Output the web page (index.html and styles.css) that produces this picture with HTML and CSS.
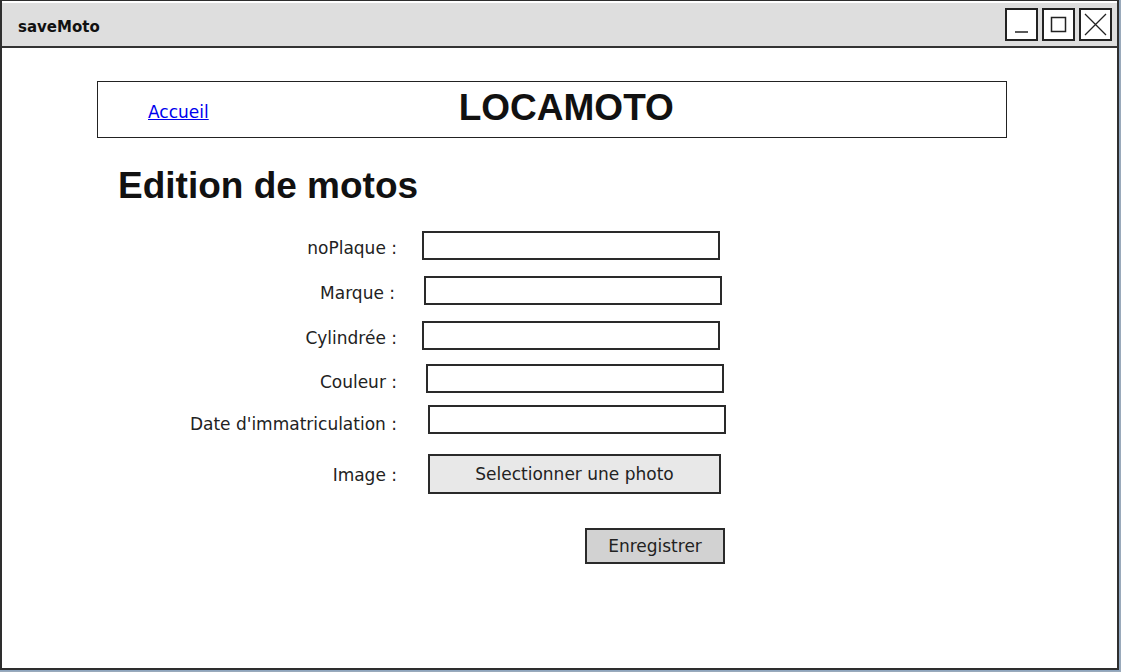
FILE: index.html
```html
<!DOCTYPE html>
<html lang="fr">
<head>
    <meta charset="UTF-8">
    <meta name="viewport" content="width=device-width, initial-scale=1.0">
    <title>saveMoto</title>
    <link rel="stylesheet" href="styles.css">
</head>
<body>
    <div class="window">
        <div class="title-bar">
            <span class="title">saveMoto</span>
            <div class="win-buttons">
                <span class="win-btn">
                    <svg width="29" height="29" viewBox="0 0 29 29"><line x1="8" y1="22" x2="21" y2="22" stroke="#222" stroke-width="1.5"/></svg>
                </span>
                <span class="win-btn">
                    <svg width="29" height="29" viewBox="0 0 29 29"><rect x="7.5" y="7.5" width="14" height="14" fill="none" stroke="#222" stroke-width="1.5"/></svg>
                </span>
                <span class="win-btn">
                    <svg width="29" height="29" viewBox="0 0 29 29"><path d="M4 4 L25 25 M25 4 L4 25" stroke="#222" stroke-width="1.3"/></svg>
                </span>
            </div>
        </div>

        <div class="content">
            <div class="header">
                <a href="#" class="home-link">Accueil</a>
                <h1>LOCAMOTO</h1>
            </div>

            <h2 class="page-title">Edition de motos</h2>

            <div class="form">
                <label>noPlaque :</label>
                <input type="text" class="field">

                <label class="label-2">Marque :</label>
                <input type="text" class="field shift-2">

                <label>Cylindrée :</label>
                <input type="text" class="field">

                <label>Couleur :</label>
                <input type="text" class="field shift-4 up-4">

                <label>Date d'immatriculation :</label>
                <input type="text" class="field shift-5 up-5">

                <label class="label-image">Image :</label>
                <button class="photo-btn">Selectionner une photo</button>
            </div>

            <div class="actions">
                <button class="save-btn">Enregistrer</button>
            </div>
        </div>
    </div>
</body>
</html>
```

FILE: styles.css
```css
body {
    margin: 0;
    background-color: #9aaabb;
    font-family: "Comic Sans MS", "DejaVu Sans", sans-serif;
}

.window {
    box-sizing: border-box;
    width: 1119px;
    height: 670px;
    margin: 0 1px 1px 0;
    border: 2px solid #2e2e2e;
    border-top-width: 1px;
    background-color: #fff;
    display: flex;
    flex-direction: column;
    box-shadow: 0 0 0 1px #8fa6bf;
}

.title-bar {
    height: 43px;
    margin-top: 2px;
    background-color: #dedede;
    border-bottom: 2px solid #333;
    display: flex;
    align-items: center;
    justify-content: space-between;
    padding: 0 5px 0 16px;
}

.title {
    font-size: 15px;
    font-weight: bold;
    color: #111;
    padding-top: 4px;
}

.win-buttons {
    display: flex;
    gap: 4px;
}

.win-btn {
    width: 29px;
    height: 29px;
    border: 2px solid #222;
    background-color: #fff;
    display: block;
}

.win-btn svg {
    display: block;
}

.content {
    flex: 1;
    padding: 33px 0 0 95px;
}

.header {
    box-sizing: border-box;
    width: 910px;
    height: 57px;
    border: 1.5px solid #222;
    display: flex;
    align-items: center;
    padding-left: 50px;
}

.home-link {
    color: #0000ee;
    font-size: 17px;
    padding-top: 5px;
}

.header h1 {
    margin: 0 0 0 250px;
    font-family: "Liberation Sans", Arial, sans-serif;
    font-size: 37px;
    font-weight: bold;
    color: #111;
    padding-bottom: 4px;
}

.page-title {
    margin: 27px 0 0 21px;
    font-family: "Liberation Sans", Arial, sans-serif;
    font-size: 37px;
    font-weight: bold;
    color: #111;
    line-height: 42px;
}

.form {
    display: grid;
    grid-template-columns: 300px 306px;
    column-gap: 25px;
    row-gap: 16px;
    margin: 24px 0 0 0;
    align-items: center;
}

.form label {
    text-align: right;
    font-size: 17px;
    color: #222;
    padding-top: 5px;
}

.field {
    box-sizing: border-box;
    width: 298px;
    height: 29px;
    border: 2px solid #2a2a2a;
    background-color: #fff;
    margin: 0;
}

.shift-2 {
    margin-left: 2px;
}

.shift-4 {
    margin-left: 4px;
}

.shift-5 {
    margin-left: 6px;
}

.up-4 {
    margin-top: -2px;
}

.up-5 {
    margin-top: -4px;
}

.label-2 {
    padding-right: 2px;
}

.label-image {
    padding-top: 6px;
}

.photo-btn {
    box-sizing: border-box;
    width: 293px;
    height: 40px;
    margin: 4px 0 0 6px;
    border: 2px solid #2a2a2a;
    background-color: #e8e8e8;
    font-family: inherit;
    font-size: 17px;
    color: #222;
}

.actions {
    margin: 34px 0 0 488px;
}

.save-btn {
    box-sizing: border-box;
    width: 140px;
    height: 36px;
    border: 2px solid #2a2a2a;
    background-color: #d2d2d2;
    font-family: inherit;
    font-size: 17px;
    color: #222;
}
```
